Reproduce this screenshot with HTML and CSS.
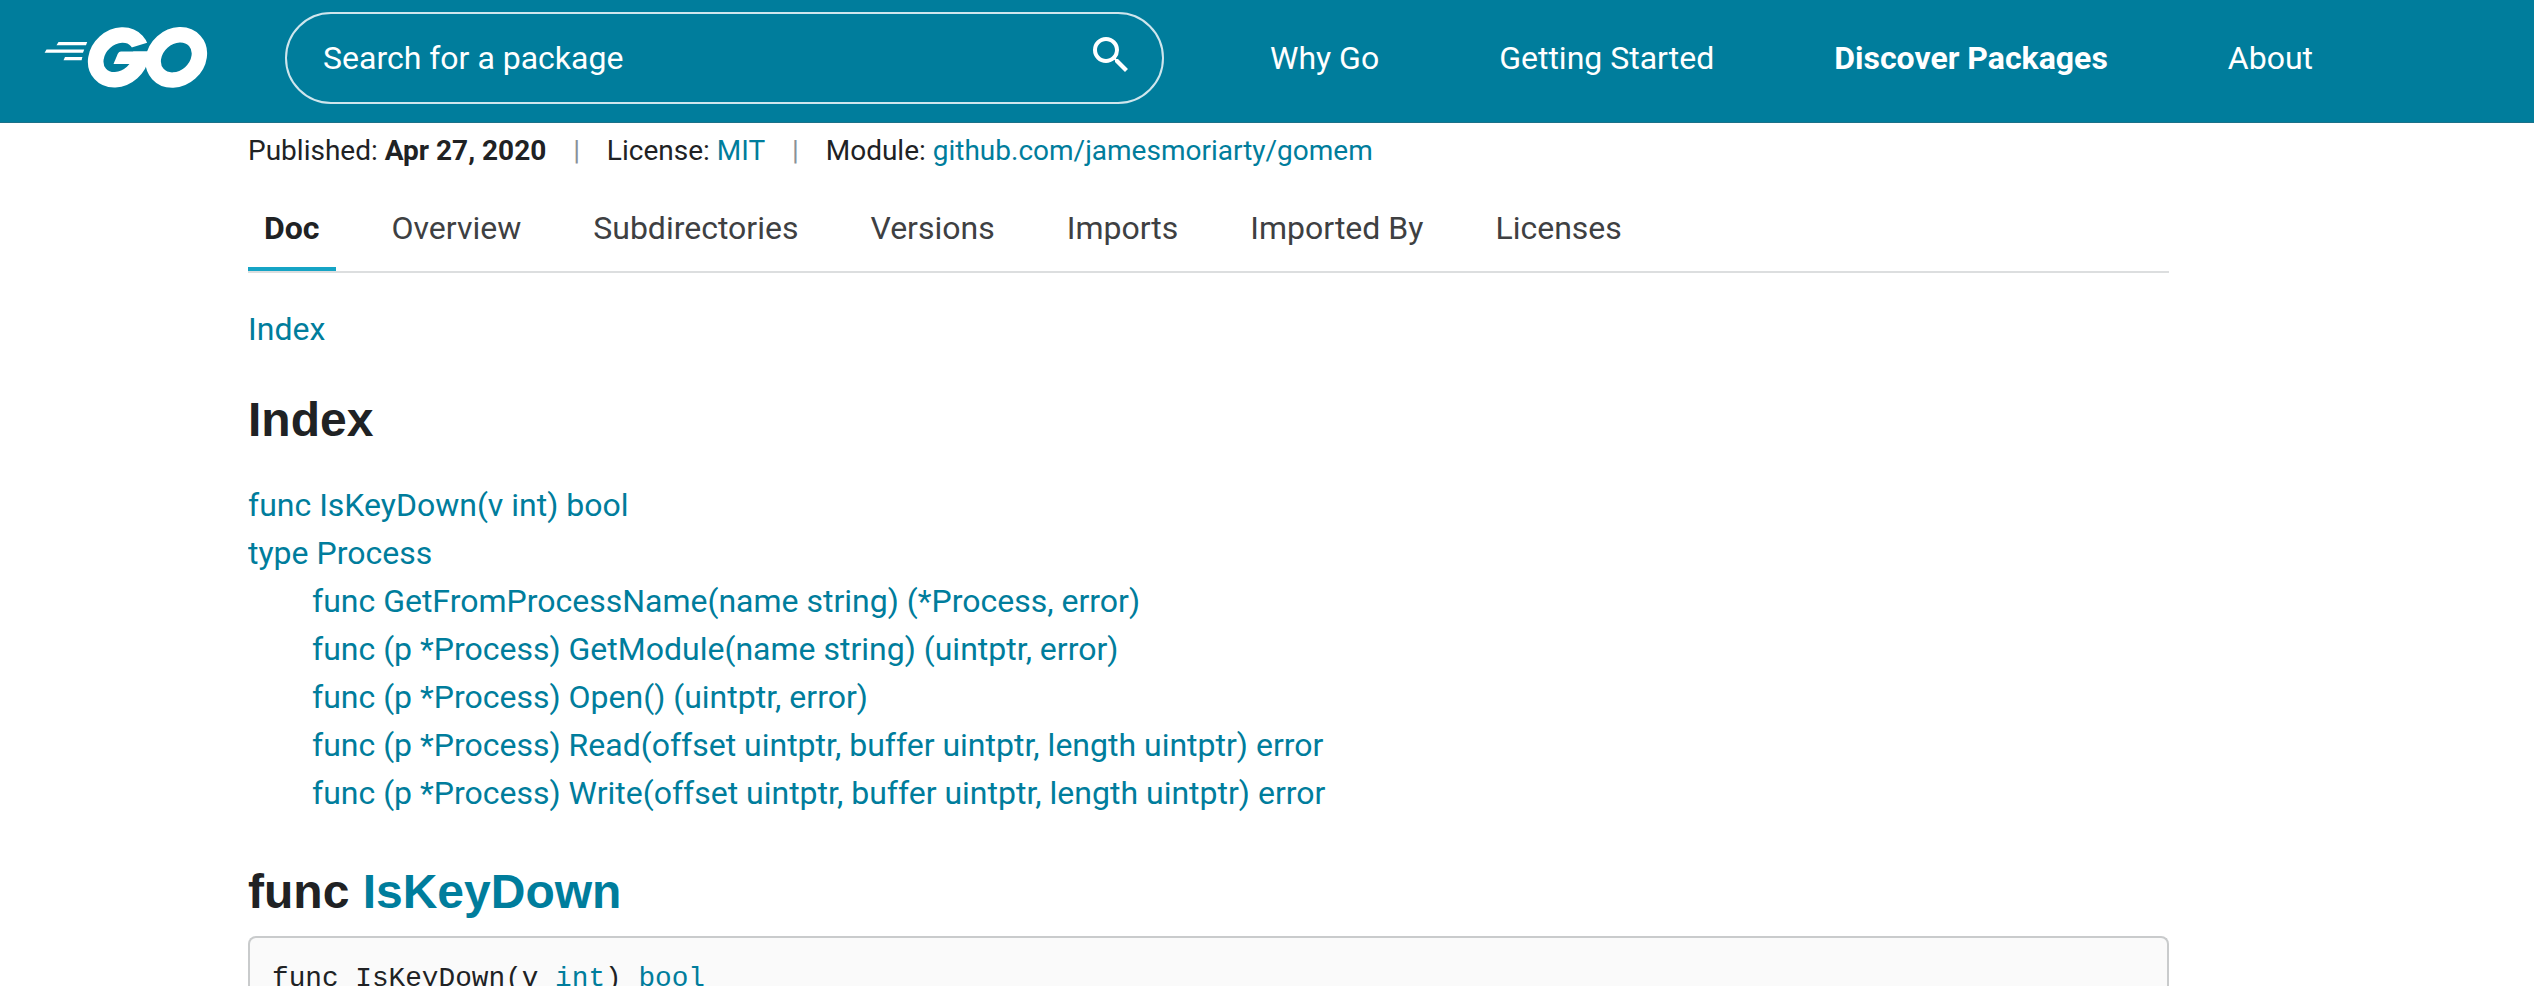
FILE: index.html
```html
<!DOCTYPE html>
<html lang="en">
<head>
<meta charset="utf-8">
<title>gomem package - pkg.go.dev</title>
<link rel="stylesheet" href="styles.css">
</head>
<body>
<header class="header">
  <a class="logo" aria-label="Go">
    <svg width="164" height="62" viewBox="44 26 164 62">
      <g fill="#fff">
        <path d="M58.5 42H87.2L86 45.3H56.5ZM46.5 49.5H84.2L83 52.8H44.6ZM65 57H82.4L81.6 60.2H63.5Z"/>
      </g>
      <ellipse cx="118.5" cy="57.4" rx="24.6" ry="20.4" transform="rotate(-42 118.5 57.4)" fill="none" stroke="#fff" stroke-width="15.6"/>
      <path d="M130 48L148 42.6L152 51.6H122Z" fill="#007d9c"/>
      <path d="M121 51.5H150V64H113.5L117.8 53.8Q118.8 51.5 121 51.5Z" fill="#fff"/>
      <ellipse cx="176.3" cy="57.4" rx="24.8" ry="20.8" transform="rotate(-42 176.3 57.4)" fill="none" stroke="#fff" stroke-width="15.4"/>
    </svg>
  </a>
  <div class="search">
    <span>Search for a package</span>
    <svg class="search-icon" width="48" height="48" viewBox="0 0 24 24"><path fill="#fff" d="M15.5 14h-.79l-.28-.27A6.47 6.47 0 0 0 16 9.5 6.5 6.5 0 1 0 9.5 16c1.61 0 3.09-.59 4.23-1.57l.27.28v.79l5 4.99L20.49 19l-4.99-5zm-6 0C7.01 14 5 11.99 5 9.5S7.01 5 9.5 5 14 7.01 14 9.5 11.99 14 9.5 14z"/></svg>
  </div>
  <nav class="nav">
    <a>Why Go</a>
    <a>Getting Started</a>
    <a class="nav-active">Discover Packages</a>
    <a>About</a>
  </nav>
</header>
<main class="content">
  <div class="meta">
    <span>Published: <strong>Apr 27, 2020</strong></span>
    <span class="divider">|</span>
    <span>License: <a>MIT</a></span>
    <span class="divider">|</span>
    <span>Module: <a>github.com/jamesmoriarty/gomem</a></span>
  </div>
  <div class="tabs">
    <span class="tab tab-active">Doc</span>
    <span class="tab">Overview</span>
    <span class="tab">Subdirectories</span>
    <span class="tab">Versions</span>
    <span class="tab">Imports</span>
    <span class="tab">Imported By</span>
    <span class="tab">Licenses</span>
  </div>
  <div class="toc"><a>Index</a></div>
  <h2 class="heading">Index</h2>
  <ul class="index">
    <li><a>func IsKeyDown(v int) bool</a></li>
    <li><a>type Process</a></li>
    <li class="sub"><a>func GetFromProcessName(name string) (*Process, error)</a></li>
    <li class="sub"><a>func (p *Process) GetModule(name string) (uintptr, error)</a></li>
    <li class="sub"><a>func (p *Process) Open() (uintptr, error)</a></li>
    <li class="sub"><a>func (p *Process) Read(offset uintptr, buffer uintptr, length uintptr) error</a></li>
    <li class="sub"><a>func (p *Process) Write(offset uintptr, buffer uintptr, length uintptr) error</a></li>
  </ul>
  <h2 class="heading heading-func">func <a>IsKeyDown</a></h2>
  <pre class="code">func IsKeyDown(v <a>int</a>) <a>bool</a></pre>
</main>
</body>
</html>
```
FILE: styles.css
```css
* { box-sizing: border-box; }
body {
  margin: 0;
  background: #fff;
  color: #202224;
  font: 32px/48px Roboto, sans-serif;
}
a { color: #007d9c; }
.header {
  display: flex;
  height: 123px;
  padding: 12px 0 0 44px;
  background: #007d9c;
  border-bottom: 1px solid #1b7189;
}
.logo { width: 241px; padding-top: 14px; }
.logo svg { display: block; }
.search {
  display: flex;
  justify-content: space-between;
  width: 879px;
  height: 92px;
  padding: 20px 27px 0 36px;
  border: 2px solid #cfe6ed;
  border-radius: 46px;
  color: #fff;
}
.search-icon { margin-top: -3px; }
.nav {
  display: flex;
  gap: 120px;
  padding: 22px 0 0 106px;
  white-space: nowrap;
}
.nav a { color: #fff; }
.nav .nav-active { font-weight: 700; }
.content {
  width: 1921px;
  height: 863px;
  margin-left: 248px;
  overflow: hidden;
}
.meta {
  display: flex;
  padding-top: 7px;
  font-size: 28px;
  line-height: 42px;
  white-space: nowrap;
}
.divider { width: 60.6px; text-align: center; color: #8a9198; }
.tabs {
  display: flex;
  gap: 40px;
  height: 69px;
  margin-top: 32px;
  border-bottom: 2px solid #dcdedf;
}
.tab { height: 67px; padding: 0 16px; color: #3e4042; }
.tab-active { color: #202224; font-weight: 700; border-bottom: 4px solid #15a4c5; }
.toc { margin-top: 32px; }
.heading {
  margin: 37px 0 0;
  font: 700 48px/60px "Liberation Sans", Arial, sans-serif;
}
.index { margin: 31px 0 0; padding: 0; list-style: none; }
.sub { padding-left: 64px; }
.heading-func { margin-top: 45px; }
.code {
  height: 50px;
  margin: 14px 0 0;
  padding: 20px 22px 0;
  border: 2px solid #c9cbcc;
  border-bottom: 0;
  border-radius: 8px 8px 0 0;
  background: #fafafa;
  font: 27.75px/42px "Liberation Mono", monospace;
}
```
